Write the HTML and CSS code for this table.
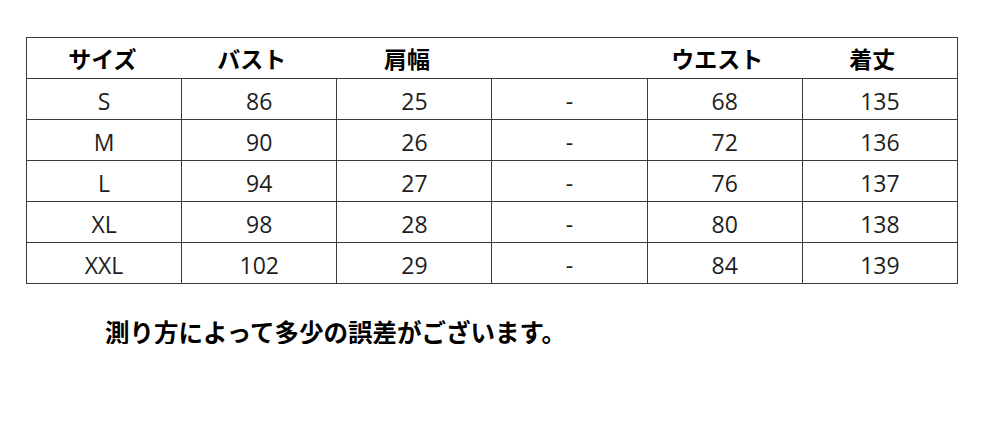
FILE: index.html
```html
<!DOCTYPE html>
<html lang="ja">
<head>
<meta charset="utf-8">
<link rel="stylesheet" href="styles.css">
</head>
<body>
<table class="size-table">
  <thead>
    <tr class="head-row">
      <th class="first">サイズ</th>
      <th>バスト</th>
      <th>肩幅</th>
      <th></th>
      <th>ウエスト</th>
      <th>着丈</th>
    </tr>
  </thead>
  <tbody>
    <tr><td>S</td><td>86</td><td>25</td><td>-</td><td>68</td><td>135</td></tr>
    <tr><td>M</td><td>90</td><td>26</td><td>-</td><td>72</td><td>136</td></tr>
    <tr><td>L</td><td>94</td><td>27</td><td>-</td><td>76</td><td>137</td></tr>
    <tr><td>XL</td><td>98</td><td>28</td><td>-</td><td>80</td><td>138</td></tr>
    <tr><td>XXL</td><td>102</td><td>29</td><td>-</td><td>84</td><td>139</td></tr>
  </tbody>
</table>
<p class="note">測り方によって多少の誤差がございます。</p>
</body>
</html>
```
FILE: styles.css
```css
html, body {
  margin: 0;
  padding: 0;
  background: #ffffff;
}

body {
  font-family: "Open Sans", "Noto Sans CJK JP", sans-serif;
  color: #1a1a1a;
}

.size-table {
  margin: 37px 0 0 26px;
  width: 932px;
  border-collapse: collapse;
  table-layout: fixed;
  border: 1px solid #3a3a3a;
}

.size-table th,
.size-table td {
  height: 40px;
  padding: 0;
  text-align: center;
  vertical-align: middle;
}

.size-table th {
  font-family: "Noto Sans CJK JP", sans-serif;
  font-weight: 700;
  font-size: 23px;
  line-height: 26px;
  color: #000;
  padding-right: 15px;
  border-bottom: 1px solid #3a3a3a;
}

.size-table th.first {
  padding-right: 4px;
}

.size-table td {
  font-family: "Open Sans", sans-serif;
  font-size: 23px;
  line-height: 26px;
  color: #1e1e1e;
  padding-top: 3px;
  height: 37px;
  border: 1px solid #3a3a3a;
}

.note {
  margin: 35px 0 0 105px;
  font-family: "Noto Sans CJK JP", sans-serif;
  font-weight: 700;
  font-size: 24.5px;
  line-height: 25px;
  color: #000;
}
```
